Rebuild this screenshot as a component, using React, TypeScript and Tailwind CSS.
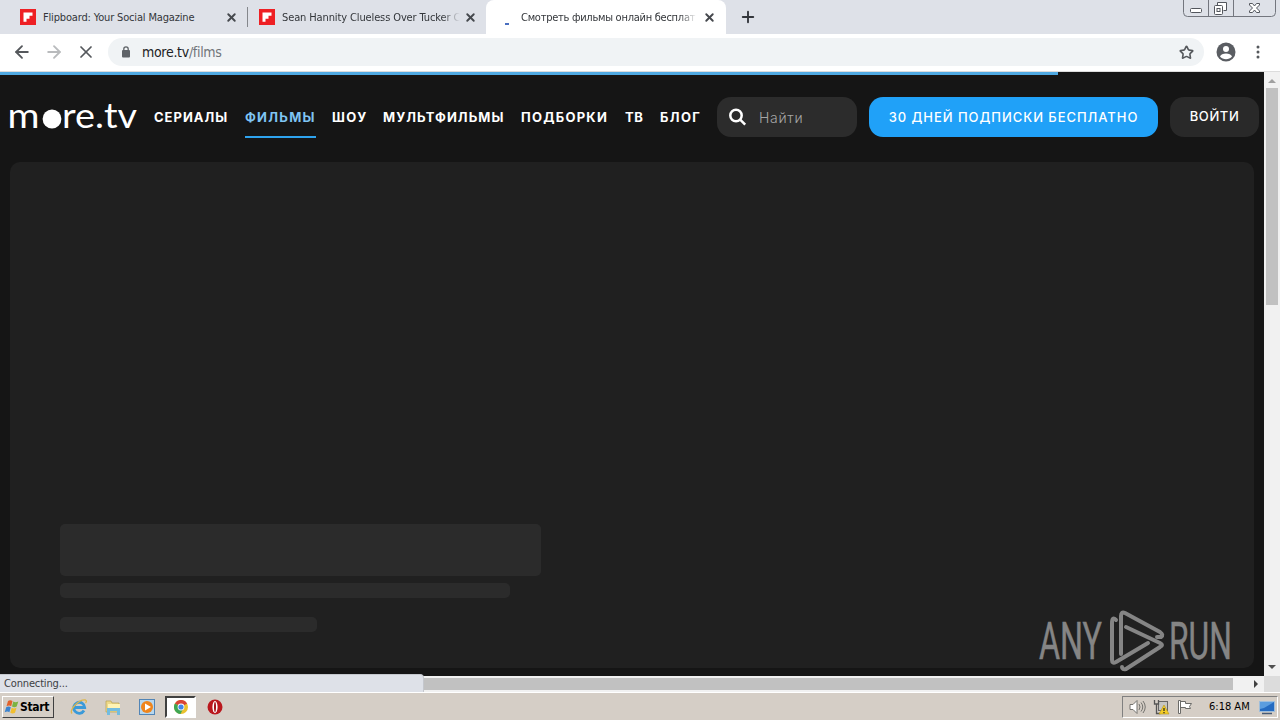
import {ReactNode} from 'react';
import {ArrowLeft, ArrowRight, Plus, X, Star} from 'lucide-react';

const navItems = [
  {label: 'СЕРИАЛЫ', box: 'w-[75px] mr-4', text: 'tracking-[1px]'},
  {label: 'ФИЛЬМЫ', box: 'w-[71px] mr-4', text: 'tracking-[1.25px]', active: true},
  {label: 'ШОУ', box: 'w-[36px] mr-[15px]', text: 'tracking-[1.5px]'},
  {label: 'МУЛЬТФИЛЬМЫ', box: 'w-[122px] mr-4', text: 'tracking-[1.05px]'},
  {label: 'ПОДБОРКИ', box: 'w-[88px] mr-4', text: 'tracking-[1.25px]'},
  {label: 'ТВ', box: 'w-[19px] mr-4', text: 'tracking-[0.6px]'},
  {label: 'БЛОГ', box: 'w-[41px] mr-4', text: 'tracking-[1.4px]'},
];

function FlipboardIcon() {
  return (
    <svg width="16" height="16" viewBox="0 0 16 16" className="shrink-0">
      <rect width="16" height="16" fill="#ee2024"/>
      <path d="M3.5 3.5h9v3.2h-3v3h-3v3h-3z" fill="#fff"/>
    </svg>
  );
}

function TabTitle({children, className}: {children: ReactNode; className: string}) {
  return (
    <span className={`ml-[7px] mt-px overflow-hidden whitespace-nowrap text-[11px] leading-4 text-[#33363a] ${className}`}>
      {children}
    </span>
  );
}

function TabStrip() {
  return (
    <div className="flex h-[34px] bg-[#dee1e8]">
      <div className="flex h-[34px] w-[248px] items-center pl-5">
        <FlipboardIcon/>
        <TabTitle className="w-[177px] tracking-[-0.16px]">Flipboard: Your Social Magazine</TabTitle>
        <X size={13} strokeWidth={3.5} className="ml-[5px] shrink-0 text-[#45484d]"/>
        <div className="ml-[9px] h-5 w-px shrink-0 bg-[#84878c]"/>
      </div>
      <div className="flex h-[34px] w-[238px] items-center pl-[11px]">
        <FlipboardIcon/>
        <TabTitle className="w-[178px] tracking-[-0.12px] [mask-image:linear-gradient(to_right,black_90%,transparent)]">Sean Hannity Clueless Over Tucker C</TabTitle>
        <X size={13} strokeWidth={3.5} className="ml-1 shrink-0 text-[#45484d]"/>
      </div>
      <div className="flex h-[34px] w-[240px] items-center rounded-t-lg bg-white pl-3">
        <svg width="16" height="16" viewBox="0 0 16 16" className="shrink-0">
          <rect x="7" y="14" width="4" height="2" fill="#4a6fc0"/>
        </svg>
        <TabTitle className="w-[176px] tracking-[-0.26px] [mask-image:linear-gradient(to_right,black_90%,transparent)]">Смотреть фильмы онлайн бесплат</TabTitle>
        <X size={13} strokeWidth={3.5} className="ml-[6px] shrink-0 text-[#45484d]"/>
      </div>
      <div className="flex items-center pl-[13px]">
        <Plus size={18} strokeWidth={2.5} className="text-[#33363b]"/>
      </div>
      <svg width="97" height="17" viewBox="0 0 97 17" className="ml-auto" fill="none" stroke="#73767e">
        <path d="M.5 0v12.5a4 4 0 0 0 4 4h84a4 4 0 0 0 4-4V0M25.500 0v16M50.500 0v16"/>
        <g stroke="#53565d">
          <rect x="7.500" y="8.500" width="11" height="4" rx="1" fill="#fff"/>
          <path d="M34.500 5.500v-3h9v8h-3" fill="#fff"/>
          <rect x="31.500" y="5.500" width="8" height="9" rx="1" fill="#fff"/>
          <rect x="34" y="8.500" width="3" height="3"/>
          <path d="M66.500 3.500h3l2 2.500 2-2.500h3v1.500l-3 3 3 3v1.500h-3l-2-2.500-2 2.500h-3V11l3-3-3-3z" fill="#fff"/>
        </g>
      </svg>
    </div>
  );
}

function Toolbar() {
  return (
    <div className="flex h-[38px] items-center border-b border-[#dcdcdc] bg-white pb-[2px] pl-3">
      <ArrowLeft size={20} strokeWidth={2.2} className="text-[#55585c]"/>
      <ArrowRight size={20} strokeWidth={2.2} className="ml-3 text-[#b9bbbd]"/>
      <X size={20} strokeWidth={2.1} className="ml-3 text-[#55585c]"/>
      <div className="ml-3 flex h-7 w-[1096px] items-center rounded-full bg-[#f0f3f5] pl-3">
        <svg width="12" height="14" viewBox="0 0 12 14">
          <rect x="2" y="5" width="8" height="7.500" rx="1" fill="#5f6368"/>
          <path d="M3.800 5.500V4a2.200 2.200 0 0 1 4.400 0v1.500" fill="none" stroke="#5f6368" strokeWidth="1.300"/>
        </svg>
        <span className="ml-[10px] text-[14px] leading-5 tracking-[-0.3px] text-[#202124]">
          more.tv<span className="text-[#70757a]">/films</span>
        </span>
        <Star size={15} strokeWidth={2.6} className="ml-auto mr-[10px] mt-px text-[#55585c]"/>
      </div>
      <svg width="20" height="20" viewBox="0 0 20 20" className="ml-3">
        <circle cx="10" cy="10" r="9.500" fill="#5a5d62"/>
        <circle cx="10" cy="7" r="3" fill="#fff"/>
        <path d="M4 14.500c1.200-4 10.800-4 12 0-3 3.600-9 3.600-12 0z" fill="#fff"/>
      </svg>
      <svg width="4" height="16" viewBox="0 0 4 16" fill="#55585c" className="ml-5">
        <circle cx="2" cy="3" r="1.500"/>
        <circle cx="2" cy="8" r="1.500"/>
        <circle cx="2" cy="13" r="1.500"/>
      </svg>
    </div>
  );
}

function MoreLogo() {
  return (
    <svg width="128" height="40" viewBox="0 0 128 40" className="mr-4 shrink-0 overflow-visible font-['Lato',sans-serif]" fill="#fff" fontSize="35">
      <text x="-2.500" y="31" textLength="32" lengthAdjust="spacingAndGlyphs">m</text>
      <circle cx="42" cy="22" r="9.400"/>
      <text x="52" y="31" textLength="75" lengthAdjust="spacingAndGlyphs">re.tv</text>
    </svg>
  );
}

function SiteHeader() {
  return (
    <header className="mt-[22px] flex h-10 items-center pl-[10px] font-['Inter','Noto_Sans',sans-serif]">
      <MoreLogo/>
      <nav className="mt-[2px] flex">
        {navItems.map((item) => (
          <div
            key={item.label}
            className={`flex h-10 items-center whitespace-nowrap border-b-2 pt-[2px] text-[13px] font-bold ${item.box} ${item.text} ${item.active ? 'border-[#2ea3ee] text-[#7fc4f3]' : 'border-transparent text-white'}`}
          >
            {item.label}
          </div>
        ))}
      </nav>
      <div className="flex h-10 w-[140px] shrink-0 items-center rounded-[14px] bg-[#2c2c2c] pl-3">
        <svg width="18" height="18" viewBox="0 0 18 18" fill="none" stroke="#fff" strokeWidth="2.500">
          <circle cx="7" cy="7.500" r="5.700"/>
          <path d="M11.200 11.700l5 5"/>
        </svg>
        <span className="ml-3 text-[14px] font-light tracking-[0.7px] text-[#a6a6a6]">Найти</span>
      </div>
      <button className="ml-3 h-10 w-[289px] shrink-0 whitespace-nowrap rounded-[14px] bg-[#20a1f8] pt-[2px] text-[13px] font-medium tracking-[0.95px] text-white">
        30 ДНЕЙ ПОДПИСКИ БЕСПЛАТНО
      </button>
      <button className="ml-3 h-10 w-[89px] shrink-0 rounded-[14px] bg-[#292929] text-[13px] font-medium tracking-[0.6px] text-white">
        ВОЙТИ
      </button>
    </header>
  );
}

function AnyRunMark() {
  return (
    <svg width="200" height="64" viewBox="0 0 200 64" className="absolute left-[1038px] top-[536px] font-['Roboto',sans-serif]" fill="#858585" stroke="#858585">
      <text x="1" y="51" fontSize="51" strokeWidth=".5" textLength="63" lengthAdjust="spacingAndGlyphs">ANY</text>
      <g fill="none" strokeWidth="4" strokeLinecap="round" strokeLinejoin="round">
        <path d="M78 12q-4-4-4 3v37q0 4 4 2l32-19"/>
        <path d="M83 46V8q0-5 4-3l35 19q4 3 1 5l-4 0"/>
        <path d="M88 19l34 16q4 2 0 4L88 61q-4 1-4-2"/>
      </g>
      <text x="131" y="51" fontSize="51" strokeWidth=".5" textLength="63" lengthAdjust="spacingAndGlyphs">RUN</text>
    </svg>
  );
}

function Page() {
  return (
    <div className="relative flex h-[604px]">
      <main className="w-[1264px] overflow-hidden bg-[#151515]">
        <div className="h-[3px] w-[1058px] bg-[#4fa9e2]"/>
        <SiteHeader/>
        <div className="ml-[10px] mt-[25px] h-[506px] w-[1244px] rounded-[10px] bg-[#202020] pl-[50px] pt-[362px]">
          <div className="h-[52px] w-[481px] rounded-[5px] bg-[#2b2b2b]"/>
          <div className="mt-[7px] h-[15px] w-[450px] rounded-[5px] bg-[#2b2b2b]"/>
          <div className="mt-[19px] h-[15px] w-[257px] rounded-[5px] bg-[#2b2b2b]"/>
        </div>
      </main>
      <div className="flex w-4 flex-col items-center bg-[#f1f1f1]">
        <svg width="16" height="16" viewBox="0 0 16 16">
          <path d="M4 11l4-4 4 4z" fill="#a0a0a0"/>
        </svg>
        <div className="h-[217px] w-3 bg-[#c1c1c1]"/>
        <svg width="16" height="16" viewBox="0 0 16 16" className="mt-auto">
          <path d="M4 5l4 4 4-4z" fill="#505050"/>
        </svg>
      </div>
      <AnyRunMark/>
    </div>
  );
}

function BottomScrollbar() {
  return (
    <div className="relative flex h-4 items-center bg-[#f1f1f1]">
      <div className="ml-4 h-3 w-[1217px] bg-[#c1c1c1]"/>
      <svg width="16" height="16" viewBox="0 0 16 16" className="ml-[15px]">
        <path d="M6 4l4 4-4 4z" fill="#404040"/>
      </svg>
      <div className="h-4 w-4 bg-[#dcdcdc]"/>
      <div className="absolute bottom-0 left-0 h-[18px] w-[424px] rounded-tr border-r border-t border-[#c4c7cd] bg-[#dee1e8] pl-1 text-[11px] leading-[17px] tracking-[-0.15px] text-[#3c4043]">
        Connecting...
      </div>
    </div>
  );
}

function Taskbar() {
  return (
    <div className="flex h-7 items-center border-t border-white bg-[#d5cec6] pt-px">
      <div className="ml-[2px] flex h-[22px] w-[52px] items-center border border-b-[#404040] border-l-white border-r-[#404040] border-t-white pl-px text-[12px] font-bold tracking-[-0.35px] text-black">
        <svg width="16" height="16" viewBox="0 0 16 16" className="shrink-0">
          <path d="M4 2q2-1.500 4.500 0L7.200 7.200q-2-1.500-4.700 0z" fill="#e2622b"/>
          <path d="M9.300 2.600q2 1.400 5 0l-1.600 5q-2.500 1.500-4.700 0z" fill="#7cb342"/>
          <path d="M2.200 8.200q2.300-1.500 4.600 0l-1.400 5q-2-1.500-4.700 0z" fill="#3b83cf"/>
          <path d="M7.700 8.700q2.200 1.400 4.800 0l-1.500 5q-2.300 1.400-4.700 0z" fill="#f2be2e"/>
        </svg>
        <span>Start</span>
      </div>
      <svg width="18" height="18" viewBox="0 0 18 18" className="ml-4" fill="none">
        <path d="M14 12.500a5.500 5.500 0 1 1 .7-3H5" stroke="#3a9ad9" strokeWidth="2.800"/>
        <path d="M2 15.500C-1 12 9 1 15.500 2c1.500.5.800 2.200 0 3" stroke="#ddb64c" strokeWidth="1.300"/>
      </svg>
      <svg width="18" height="18" viewBox="0 0 18 18" className="ml-[16px]">
        <path d="M2 3h5l1 2h7v9H2z" fill="#edd98a" stroke="#b9a04e" strokeWidth=".7"/>
        <path d="M4 6h12v4H4z" fill="#fff3b4"/>
        <path d="M3 10h13v7h-3v-4H6v4H3z" fill="#73bce0"/>
      </svg>
      <svg width="17" height="17" viewBox="0 0 17 17" className="ml-[17px]">
        <rect x=".5" y=".5" width="15" height="15" fill="#b7d7ee" stroke="#5285b6"/>
        <circle cx="8" cy="8" r="6" fill="#ef851c"/>
        <path d="M6 4.500v7l6-3.500z" fill="#fff"/>
      </svg>
      <div className="ml-[9px] flex h-[22px] w-[31px] items-center justify-center border-2 border-b-white border-l-[#404040] border-r-white border-t-[#404040] bg-white">
        <svg width="14" height="14" viewBox="0 0 14 14">
          <circle cx="7" cy="7" r="7" fill="#eac12e"/>
          <path d="M7 7L.9 3.500A7 7 0 0 1 13.100 3.500z" fill="#d94436"/>
          <path d="M7 7L.9 3.500A7 7 0 0 0 6.500 14L9 9z" fill="#3fa653"/>
          <circle cx="7" cy="7" r="3.400" fill="#fff"/>
          <circle cx="7" cy="7" r="2.600" fill="#4286e8"/>
        </svg>
      </div>
      <svg width="16" height="16" viewBox="0 0 16 16" className="ml-[11px]">
        <circle cx="8" cy="8" r="7.500" fill="#ba171d"/>
        <ellipse cx="8" cy="8" rx="2.600" ry="6" fill="#fff"/>
        <ellipse cx="8" cy="8" rx="1" ry="5" fill="#a5131a"/>
      </svg>
      <div className="ml-auto mr-[2px] flex h-[22px] w-[156px] items-center border border-b-white border-l-[#808080] border-r-white border-t-[#808080] pl-[6px]">
        <svg width="17" height="16" viewBox="0 0 17 16" stroke="#74736f" fill="none">
          <path d="M1 5.500h3l4-4v13l-4-4H1z" fill="#fff"/>
          <path d="M10 5q2 3 0 6M12 3.500q3.500 4.500 0 9M14 2q4.500 6 0 12"/>
        </svg>
        <svg width="17" height="16" viewBox="0 0 17 16" className="ml-[7px]">
          <rect x="5.500" y="2.500" width="9" height="9" fill="#c6c6c3" stroke="#666"/>
          <path d="M1.500 1v4h4V1M3.500 5v9.500h4" fill="none" stroke="#555" strokeWidth="1.300"/>
          <path d="M11 6l5 9H6z" fill="#f4cd25" stroke="#b69316" strokeWidth=".6"/>
          <path d="M11 9v3M11 13v1.200" stroke="#222" strokeWidth="1.200"/>
        </svg>
        <svg width="17" height="16" viewBox="0 0 17 16" className="ml-[7px]" stroke="#6b6b68" fill="#fff">
          <path d="M1.500 1.500h2v13h-2zM3.500 2.500h5v2h6l-2 3 1 2H8.500v-1h-5z"/>
        </svg>
        <span className="ml-[15px] whitespace-nowrap text-[11px] text-black">6:18 AM</span>
        <svg width="17" height="15" viewBox="0 0 17 15" className="ml-auto mr-px">
          <rect x=".5" y="1.500" width="15" height="10" fill="#256bc1" stroke="#9fbedb"/>
          <path d="M1 2h14L5 8 1 9z" fill="#5b9ddf"/>
          <path d="M3 13.500h10" stroke="#465a75" strokeWidth="1.500"/>
        </svg>
      </div>
    </div>
  );
}

export default function App() {
  return (
    <div className="h-[720px] w-[1280px] overflow-hidden bg-white font-['DejaVu_Sans_Condensed','DejaVu_Sans',sans-serif]">
      <TabStrip/>
      <Toolbar/>
      <Page/>
      <BottomScrollbar/>
      <Taskbar/>
    </div>
  );
}
